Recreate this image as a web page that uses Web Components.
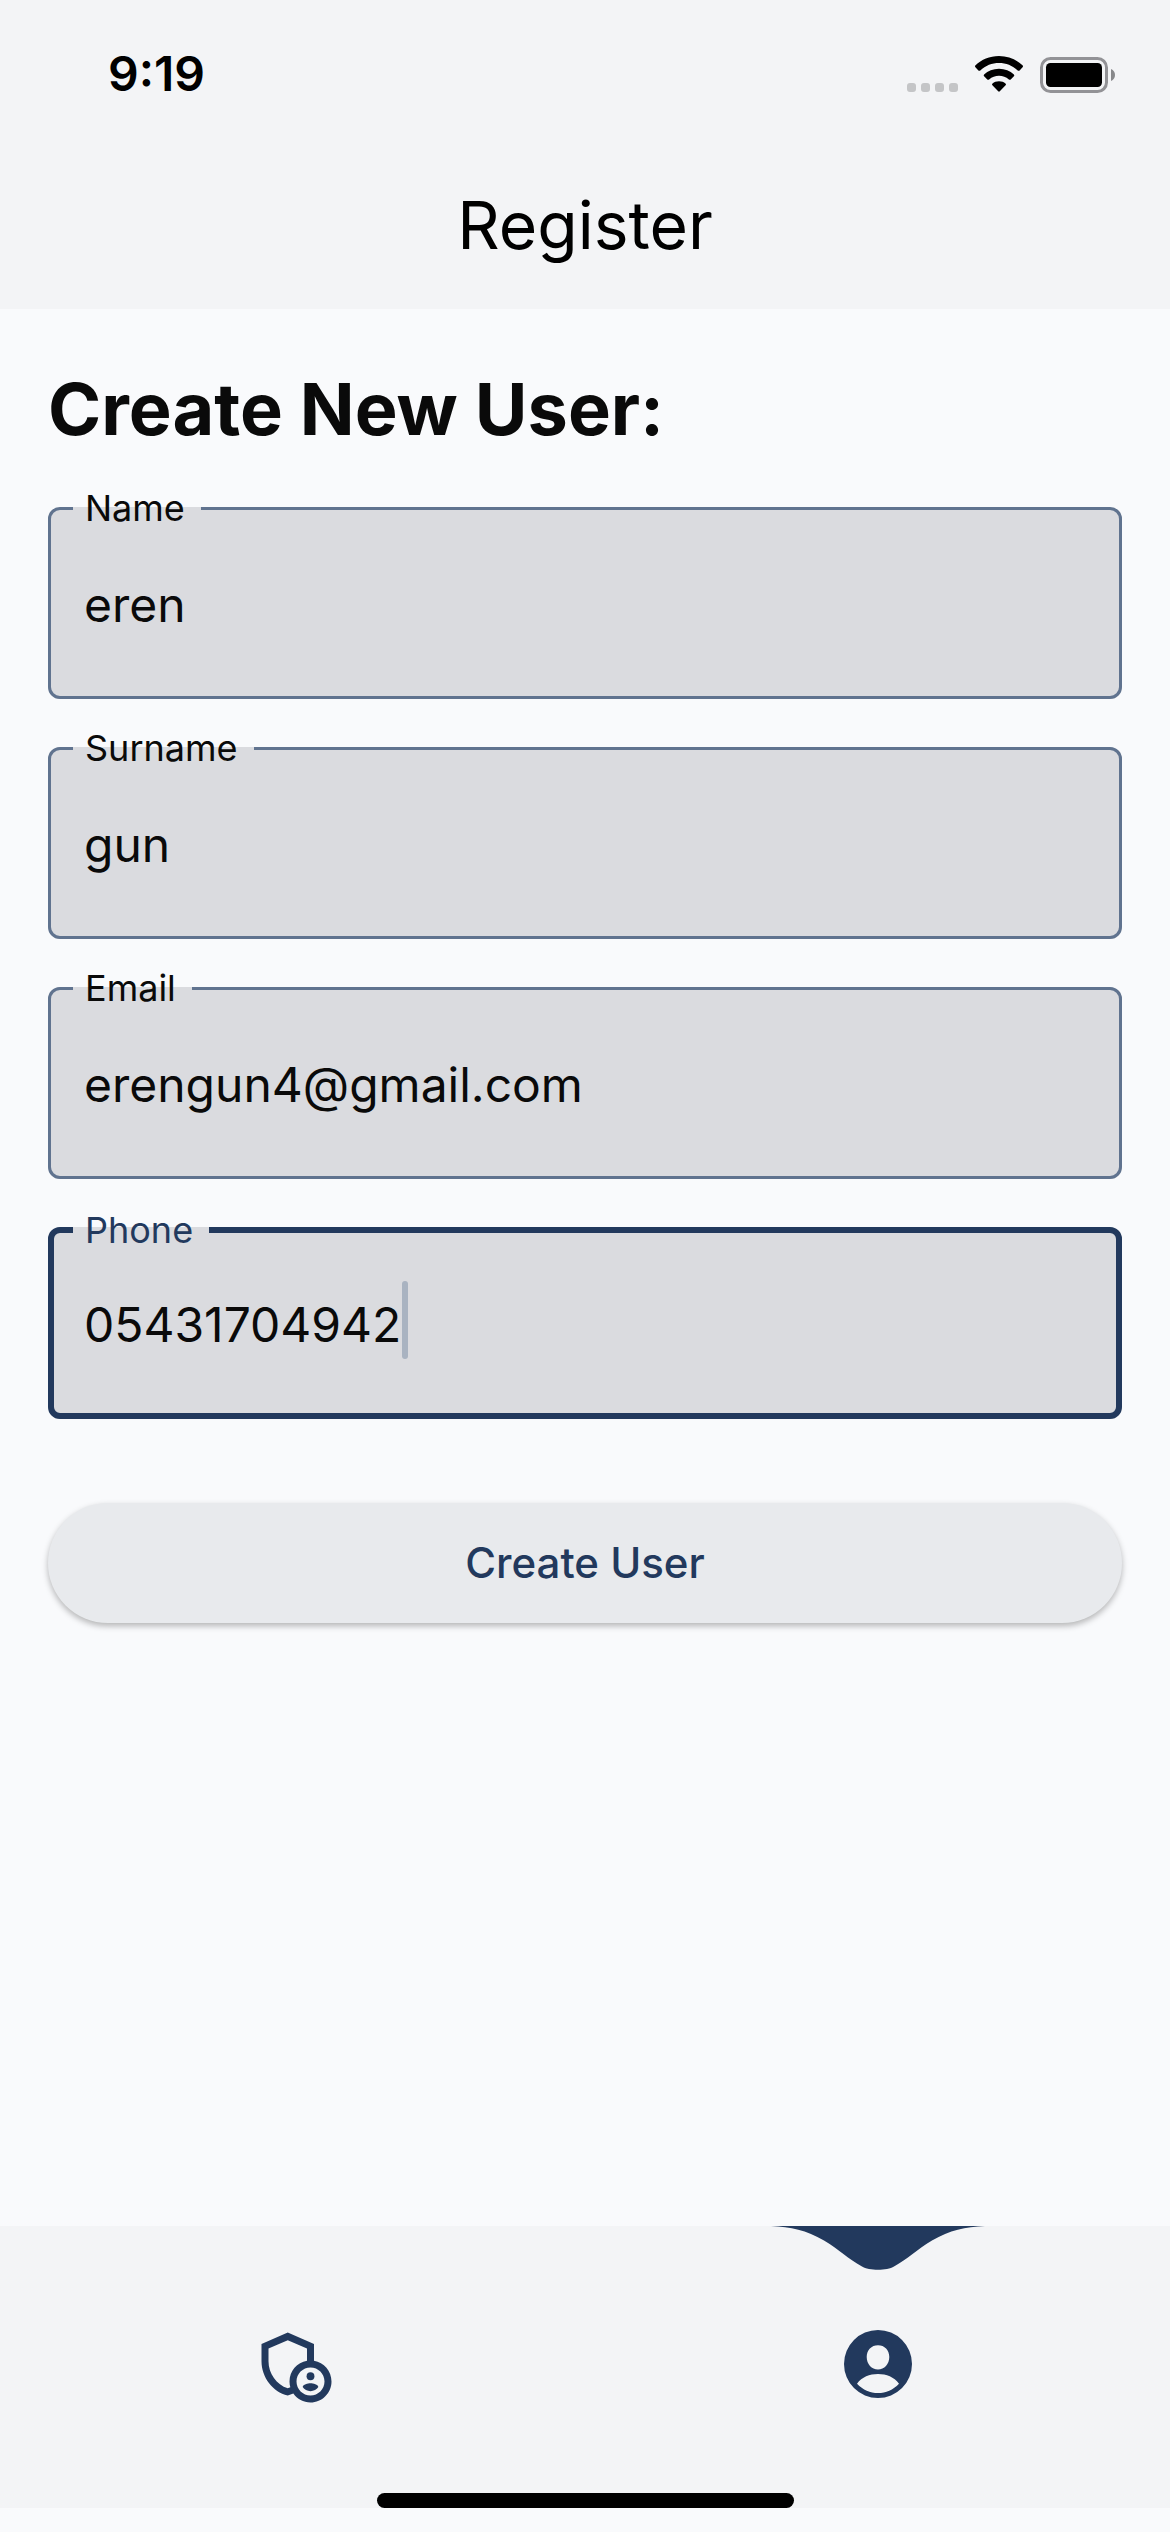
<!DOCTYPE html>
<html lang="en">
<head>
<meta charset="utf-8">
<meta name="viewport" content="width=device-width, initial-scale=1">
<title>Register</title>
<style>
  :root {
    --page: #f9fafc;
    --bar: #f3f4f6;
    --field: #dadbdf;
    --outline: #60738f;
    --navy: #22395d;
    --ink: #0a0a0a;
  }
  body {
    margin: 0;
    background: var(--page);
    color: var(--ink);
    font-family: Inter, "Liberation Sans", sans-serif;
  }
</style>
</head>
<body>
<app-screen>
  <status-bar slot="top" time="9:19"></status-bar>
  <app-title slot="top">Register</app-title>
  <register-form heading="Create New User:">
    <text-field label="Name" value="eren"></text-field>
    <text-field label="Surname" value="gun"></text-field>
    <text-field label="Email" type="email" value="erengun4@gmail.com"></text-field>
    <text-field label="Phone" type="tel" value="05431704942" active></text-field>
    <pill-button slot="action">Create User</pill-button>
  </register-form>
  <tab-bar slot="bottom">
    <tab-item label="Admin">
      <svg width="84" height="84" viewBox="0 0 24 24" fill="currentColor" aria-hidden="true">
        <path fill-rule="evenodd" d="M18 11.09V6.27L10.5 3 3 6.27v4.91c0 4.54 3.2 8.79 7.5 9.82.55-.13 1.08-.32 1.6-.55C13.18 21.99 14.97 23 17 23c3.31 0 6-2.69 6-6 0-2.97-2.16-5.43-5-5.91zM11 17c0 .56.08 1.11.23 1.62-.24.11-.48.22-.73.3-3.17-1-5.5-4.24-5.5-7.74v-3.6l5.5-2.4 5.5 2.4v3.51c-2.84.48-5 2.94-5 5.91zm6 4c-2.21 0-4-1.79-4-4s1.79-4 4-4 4 1.79 4 4-1.79 4-4 4z"/>
        <circle cx="17" cy="15.5" r="1.12"/>
        <path d="M17 17.5c-.73 0-2.19.36-2.24 1.08.5.71 1.32 1.17 2.24 1.17s1.74-.46 2.24-1.17c-.05-.72-1.51-1.08-2.24-1.08z"/>
      </svg>
    </tab-item>
    <tab-item label="Account" active>
      <svg width="68" height="68" viewBox="0 0 68 68" fill="currentColor" aria-hidden="true">
        <path fill-rule="evenodd" d="M34 0a34 34 0 1 1 0 68a34 34 0 0 1 0-68zM34 15.3c-6.600 0-11.300 4.900-11.300 11.700C22.700 34 27.700 39.600 34 39.600S45.300 34 45.300 27C45.300 20.200 40.600 15.300 34 15.300zM13 53.700C19 60 26 63 34 63s15-3 21-9.300C50 47 42.500 44 34 44S18 47 13 53.700z"/>
      </svg>
    </tab-item>
  </tab-bar>
</app-screen>

<script>
  const define = (name, markup, setup) => {
    const template = document.createElement('template');
    template.innerHTML = markup;
    customElements.define(name, class extends HTMLElement {
      constructor() {
        super();
        this.attachShadow({ mode: 'open' }).append(template.content.cloneNode(true));
      }
      connectedCallback() {
        if (setup) setup(this, this.shadowRoot);
      }
    });
  };

  define('app-screen', `
    <style>
      :host { display: flex; flex-direction: column; min-height: 100vh; box-sizing: border-box; padding-bottom: 24px; }
      header { background: var(--bar); color: #000; }
      main { flex: 1; }
    </style>
    <header><slot name="top"></slot></header>
    <main><slot></slot></main>
    <slot name="bottom"></slot>`);

  define('status-bar', `
    <style>
      :host { display: flex; align-items: center; justify-content: space-between; height: 134px; padding: 7px 55px 0 108px; }
      time { font-size: 48px; line-height: 58px; font-weight: 600; }
      .icons { display: flex; align-items: flex-end; }
      .signal { margin-right: 17px; }
      .wifi { margin-right: 17px; }
      svg { display: block; }
    </style>
    <time></time>
    <div class="icons">
      <svg class="signal" width="51" height="10" viewBox="0 0 51 10" fill="#c4c5c7" aria-hidden="true">
        <rect width="9" height="9" rx="3"/><rect x="14" width="9" height="9" rx="3"/>
        <rect x="28" width="9" height="9" rx="3"/><rect x="42" width="9" height="9" rx="3"/>
      </svg>
      <svg class="wifi" width="48" height="37" viewBox="0 0 48 37" aria-hidden="true">
        <path d="M24 0C33.500 0 41.500 3.600 47.500 9.300Q48.500 10.300 47.600 11.300L44.600 14.400Q43.700 15.300 42.700 14.400C37.500 9.500 31 7 24 7S10.500 9.500 5.300 14.400Q4.300 15.300 3.400 14.400L.400 11.300Q-.500 10.300 .500 9.300C6.500 3.600 14.500 0 24 0z"/>
        <path d="M24 12.700C30 12.700 35 14.800 38.900 18.400Q39.800 19.300 38.900 20.200L35.700 23.400Q34.900 24.200 33.900 23.400C31 21 27.700 19.800 24 19.800S17 21 14.100 23.400Q13.100 24.200 12.300 23.400L9.100 20.200Q8.200 19.300 9.100 18.400C13 14.800 18 12.700 24 12.700z"/>
        <path d="M24 25.300C26.700 25.300 28.800 26.200 30.500 27.500Q31.500 28.400 30.600 29.300L24.800 35.300Q24 36.100 23.200 35.300L17.400 29.300Q16.500 28.400 17.500 27.500C19.200 26.200 21.300 25.300 24 25.300z"/>
      </svg>
      <svg width="75" height="36" viewBox="0 0 75 36" aria-hidden="true">
        <rect x="1.500" y="1.500" width="65" height="33" rx="9" fill="none" stroke="#929296" stroke-width="3"/>
        <rect x="6" y="6" width="56" height="24" rx="4.500"/>
        <path d="M71 12c2.600 1 4 3.400 4 6s-1.400 5-4 6z" fill="#87888b"/>
      </svg>
    </div>`,
    (host, root) => { root.querySelector('time').textContent = host.getAttribute('time'); });

  define('app-title', `
    <style>
      :host { display: block; }
      h1 { margin: 0; font-size: 66px; line-height: 168px; font-weight: 400; text-align: center; }
    </style>
    <h1><slot></slot></h1>`);

  define('register-form', `
    <style>
      :host { display: block; padding: 58px 48px; }
      h2 { margin: 0 0 36px; font-size: 72px; line-height: 84px; font-weight: 700; }
      form { display: flex; flex-direction: column; }
      .fields { display: flex; flex-direction: column; gap: 28px; margin-bottom: 84px; }
    </style>
    <form>
      <h2></h2>
      <div class="fields"><slot></slot></div>
      <slot name="action"></slot>
    </form>`,
    (host, root) => { root.querySelector('h2').textContent = host.getAttribute('heading'); });

  define('text-field', `
    <style>
      :host { display: block; --line: 3px; --tone: var(--outline); --label: var(--ink); }
      :host([active]) { --line: 6px; --tone: var(--navy); --label: var(--navy); }
      fieldset {
        margin: 0; min-width: 0;
        padding: calc(34px - var(--line)) calc(36px - var(--line)) calc(52px - var(--line));
        border: var(--line) solid var(--tone);
        border-radius: 12px;
        background: var(--field);
      }
      legend {
        margin-left: -11px; padding: 0 16px 0 12px;
        font-size: 36px; line-height: calc(40px + var(--line)); color: var(--label);
      }
      .row { display: flex; align-items: flex-start; }
      input {
        flex: 1; min-width: 0; height: 86px; padding: 0; border: 0; outline: 0;
        background: none; color: inherit; font: inherit; font-size: 48px;
      }
      .caret { display: none; width: 6px; height: 78px; margin-left: 1px; border-radius: 3px; background: #a9b3c1; }
      :host([active]) input { flex: none; field-sizing: content; caret-color: transparent; }
      :host([active]) .caret { display: block; }
    </style>
    <fieldset>
      <legend><label for="control"></label></legend>
      <div class="row"><input id="control"><span class="caret"></span></div>
    </fieldset>`,
    (host, root) => {
      const input = root.querySelector('input');
      root.querySelector('label').textContent = host.getAttribute('label');
      input.type = host.getAttribute('type') || 'text';
      input.value = host.getAttribute('value') || '';
    });

  define('pill-button', `
    <style>
      :host { display: block; }
      button {
        display: block; width: 100%; height: 120px; padding: 0; border: 0; border-radius: 60px;
        background: #e8eaed; color: var(--navy);
        font: inherit; font-size: 42px; font-weight: 500; line-height: 60px;
        box-shadow: 0 3px 6px rgba(0, 0, 0, .28);
      }
    </style>
    <button type="button"><slot></slot></button>`);

  define('tab-bar', `
    <style>
      :host { display: flex; flex-direction: column; align-items: center; background: var(--bar); }
      nav { display: flex; width: 100%; height: 267px; }
      .home { width: 417px; height: 15px; border-radius: 8px; background: #000; }
    </style>
    <nav><slot></slot></nav>
    <div class="home"></div>`);

  define('tab-item', `
    <style>
      :host { display: flex; flex: 1; position: relative; color: var(--navy); }
      button {
        flex: 1; display: flex; align-items: center; justify-content: center;
        padding: 9px 0 0; border: 0; background: none; color: inherit;
      }
      .wave { display: none; position: absolute; top: 0; left: 50%; transform: translateX(-50%); }
      :host([active]) .wave { display: block; }
    </style>
    <svg class="wave" width="214" height="44" viewBox="0 0 214 44" fill="currentColor" aria-hidden="true">
      <path d="M0 0C20 1 35 4 53 14.500 69 24 77 33 91 40.500 98 44.800 116 44.800 123 40.500 137 33 145 24 161 14.500 179 4 194 1 214 0z"/>
    </svg>
    <button type="button"><slot></slot></button>`,
    (host, root) => { root.querySelector('button').setAttribute('aria-label', host.getAttribute('label')); });
</script>
</body>
</html>
